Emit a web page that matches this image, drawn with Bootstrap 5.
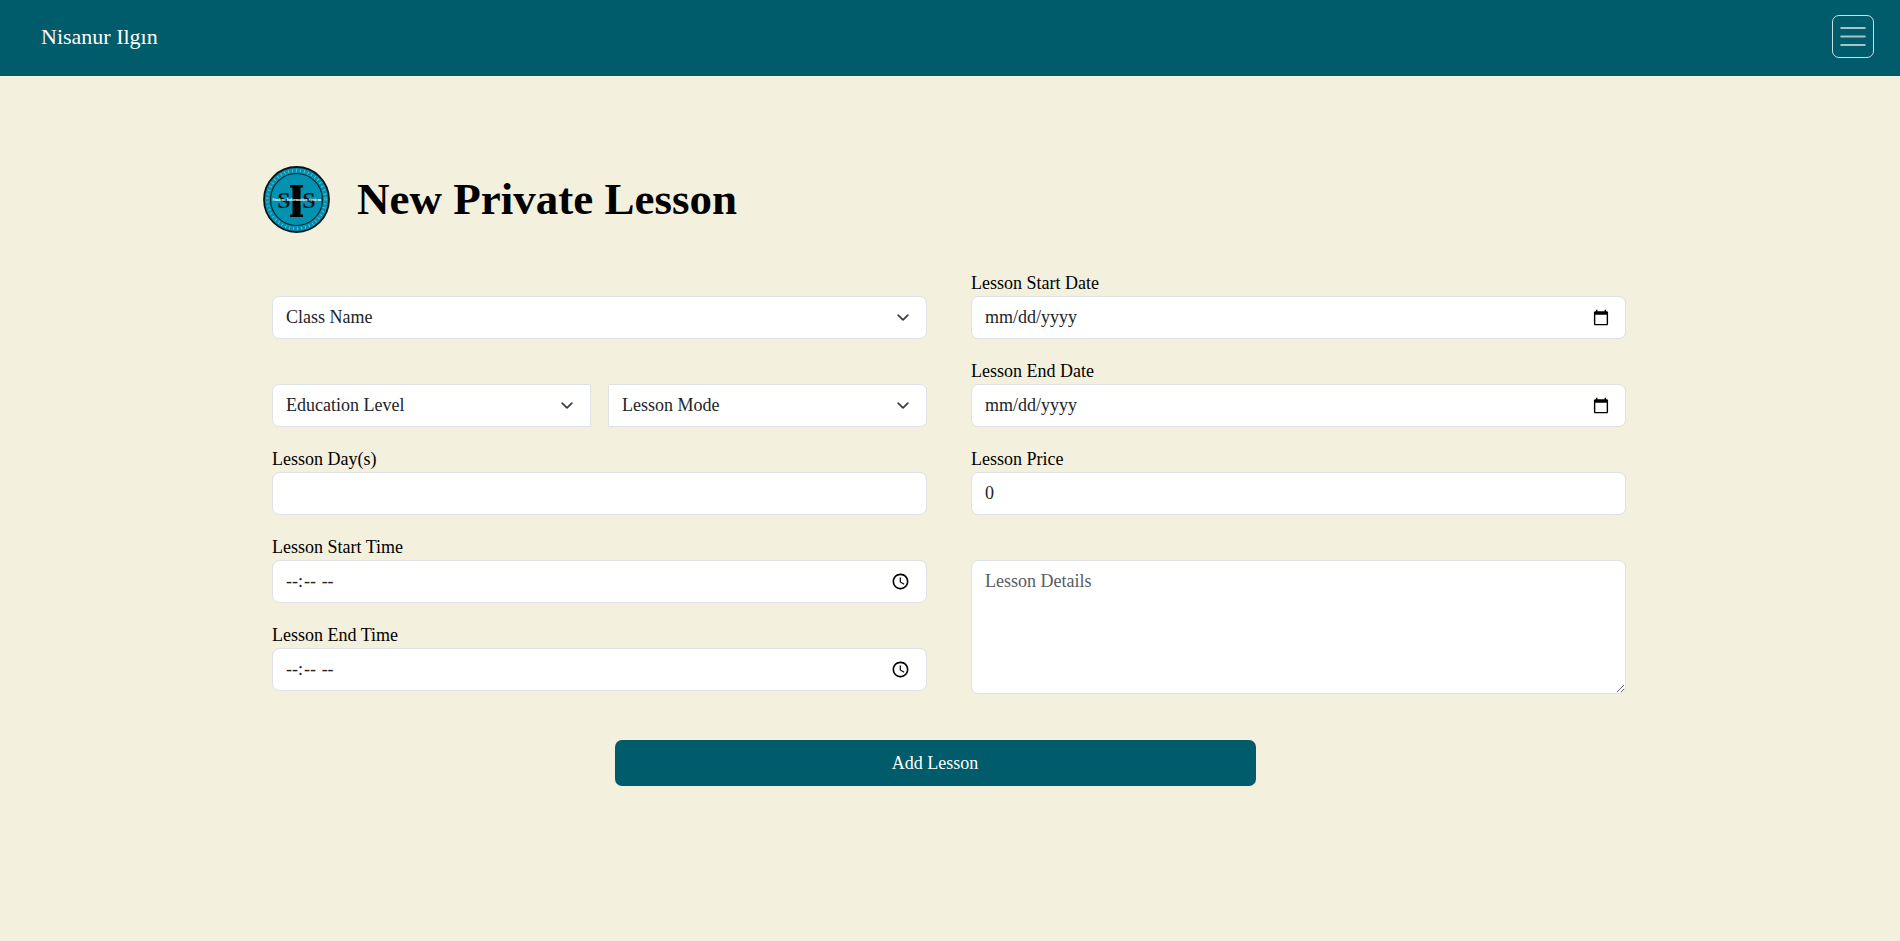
<!DOCTYPE html>
<html lang="en">
<head>
<meta charset="utf-8">
<meta name="viewport" content="width=device-width, initial-scale=1">
<title>New Private Lesson</title>
<link href="https://cdn.jsdelivr.net/npm/bootstrap@5.3.0/dist/css/bootstrap.min.css" rel="stylesheet">
<style>
  :root { --sis-teal: #005b6a; --sis-cream: #f3f0de; }
  body {
    background: var(--sis-cream);
    color: #000;
    font-family: "Liberation Serif", "Times New Roman", serif;
    font-size: 18px;
    line-height: 26px;
  }
  .top-bar { background: var(--sis-teal); min-height: 76px; padding: 0 26px 3px 41px; }
  .top-bar .navbar-brand { font-size: 22px; color: #fff; margin: 0; padding: 0; }
  .top-bar .navbar-toggler { padding: 4px; border: 1px solid rgba(255,255,255,.8); border-radius: 7px; line-height: 1; }
  .menu-lines { display: block; width: 32px; height: 33px; }
  .lesson-page { max-width: 1374px; padding-top: 90px; padding-bottom: 48px; }
  .page-head { gap: 27px; margin-bottom: 37px; }
  .page-head h1 { font-size: 45px; line-height: 54px; font-weight: 700; margin: 0; padding-bottom: 2px; }
  .sis-logo { width: 67px; height: 67px; flex: none; }
  .lesson-form { padding: 0 11px 0 9px; }
  .form-columns { display: grid; grid-template-columns: 1fr; column-gap: 44px; row-gap: 19px; }
  .field-stack { display: flex; flex-direction: column; gap: 19px; min-width: 0; }
  .field-stack label { display: block; }
  .no-caption { padding-top: 26px; }
  .lesson-form .form-control, .lesson-form .form-select {
    height: 43px; font-size: 18px; line-height: 27px; border: 1px solid #dee2e6;
    border-radius: 7px; padding: 7px 13px; color: #212529; background-color: #fff;
  }
  .lesson-form .form-select { padding-right: 40px; background-position: right 14px center; background-size: 18px 13px; }
  .lesson-form textarea.form-control { height: 134px; }
  .lesson-form .form-control::placeholder { color: #595c5f; }
  .select-pair { gap: 17px; }
  .btn-lesson {
    display: block; width: 48%; margin: 46px 0 0 calc(25% + 4px); max-width: 641px; height: 46px; padding: 0;
    border-radius: 7px; border: 0; font-size: 18px; background: var(--sis-teal); color: #fff;
  }
  .btn-lesson:hover { background: #004a57; color: #fff; }
  @media (min-width: 768px) { .form-columns { grid-template-columns: 1fr 1fr; } }
</style>
</head>
<body>
<nav class="navbar top-bar">
  <a class="navbar-brand" href="#">Nisanur Ilgın</a>
  <button class="navbar-toggler" type="button" aria-label="Toggle navigation">
    <svg class="menu-lines" viewBox="0 0 30 30" aria-hidden="true"><path d="M4 7h22M4 15h22M4 23h22" stroke="#fff" stroke-opacity=".65" stroke-width="2" stroke-linecap="round" stroke-miterlimit="10"/></svg>
  </button>
</nav>

<main class="lesson-page container-fluid px-0">
  <header class="page-head d-flex align-items-center">
    <svg class="sis-logo" viewBox="0 0 67 67" role="img" aria-label="SIS logo">
      <circle cx="33.5" cy="33.5" r="32.5" fill="#0092b0" stroke="#06161c" stroke-width="1.800"/>
      <circle cx="33.5" cy="33.5" r="29" fill="none" stroke="#6cc4d4" stroke-width="3" stroke-dasharray=".8 3.2"/>
      <circle cx="33.5" cy="33.5" r="26" fill="none" stroke="#06252e" stroke-width="1.200"/>
      <path d="M27 19h13v2.500h-2.500v27h2.500v2.500h-13v-2.500h2.500v-27h-2.500z" fill="#000"/>
      <g font-family="Liberation Serif, serif" font-weight="700" font-size="24" text-anchor="middle" fill="#04181d">
        <text x="21" y="42">S</text><text x="46" y="42">S</text>
      </g>
      <text x="33.5" y="35" font-family="Liberation Serif, serif" font-weight="700" font-size="4" text-anchor="middle" fill="#fff">Student Information System</text>
    </svg>
    <h1>New Private Lesson</h1>
  </header>

  <form class="lesson-form">
    <div class="form-columns">
      <div class="field-stack">
        <div class="no-caption">
          <select class="form-select" aria-label="Class Name"><option>Class Name</option></select>
        </div>
        <div class="no-caption">
          <div class="select-pair d-flex">
            <select class="form-select rounded-end-0" aria-label="Education Level"><option>Education Level</option></select>
            <select class="form-select rounded-start-0 rounded-end" aria-label="Lesson Mode"><option>Lesson Mode</option></select>
          </div>
        </div>
        <div><label for="days">Lesson Day(s)</label><input id="days" type="text" class="form-control"></div>
        <div><label for="startTime">Lesson Start Time</label><input id="startTime" type="time" class="form-control"></div>
        <div><label for="endTime">Lesson End Time</label><input id="endTime" type="time" class="form-control"></div>
      </div>
      <div class="field-stack">
        <div><label for="startDate">Lesson Start Date</label><input id="startDate" type="date" class="form-control"></div>
        <div><label for="endDate">Lesson End Date</label><input id="endDate" type="date" class="form-control"></div>
        <div><label for="price">Lesson Price</label><input id="price" type="number" class="form-control" value="0"></div>
        <div class="no-caption"><textarea class="form-control" placeholder="Lesson Details" aria-label="Lesson Details"></textarea></div>
      </div>
    </div>
    <button type="button" class="btn btn-lesson">Add Lesson</button>
  </form>
</main>
<script src="https://cdn.jsdelivr.net/npm/bootstrap@5.3.0/dist/js/bootstrap.bundle.min.js"></script>
</body>
</html>
